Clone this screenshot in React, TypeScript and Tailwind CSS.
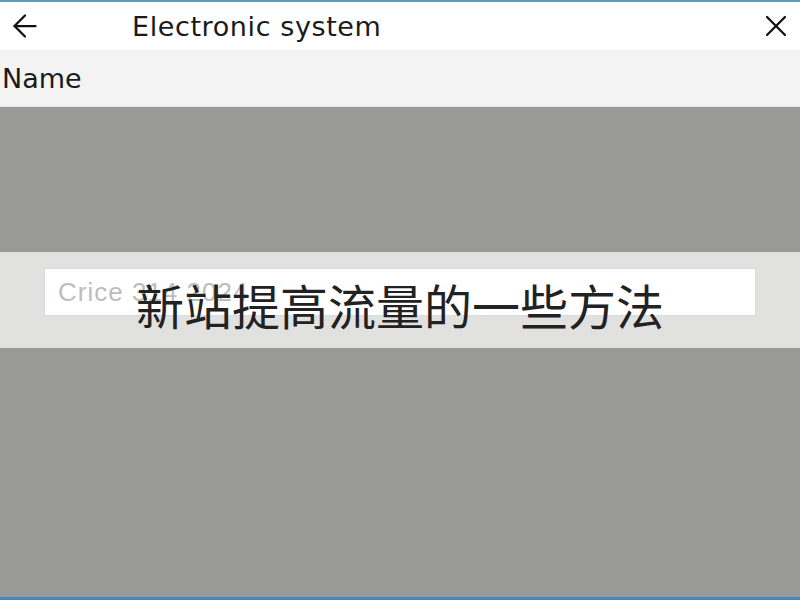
import { ArrowLeft, X } from 'lucide-react';

export default function App() {
  return (
    <div className="relative flex h-[600px] w-[800px] flex-col overflow-hidden bg-[#999998] font-['DejaVu_Sans','Noto_Sans_CJK_SC',sans-serif]">
      {/* window edge */}
      <div className="h-[2px] bg-[#5b9bb8]" />

      {/* Header */}
      <header className="flex h-[48px] items-center bg-white">
        <button className="ml-[7px] flex h-9 w-9 items-center justify-center text-[#111]">
          <ArrowLeft className="h-[36px] w-[36px]" strokeWidth={1.5} />
        </button>
        <h1 className="ml-[89px] text-[27px] leading-none tracking-[0.6px] text-[#1a1a1a]">Electronic system</h1>
        <button className="ml-auto mr-[6px] flex h-9 w-9 items-center justify-center text-[#111]">
          <X className="h-[38px] w-[38px]" strokeWidth={1.5} />
        </button>
      </header>

      {/* Name row */}
      <div className="flex h-[57px] items-center border-b border-[#e6e6e6] bg-[#f3f3f3] pl-[2px]">
        <span className="text-[27px] leading-none text-[#1a1a1a]">Name</span>
      </div>

      <div className="h-[145px]" />

      {/* Input band */}
      <div className="flex h-[96px] items-start bg-[#e1e1e0] px-[44px] pt-[16px]">
        <div className="flex h-[48px] w-full items-center border border-[#d3dde2] bg-white px-[13px]">
          <span className="font-['Liberation_Sans',sans-serif] text-[26px] leading-none tracking-[1px] text-[#bdbdbd]">Crice 314 2024</span>
        </div>
      </div>

      <div className="flex-1" />
      <div className="h-[3px] bg-[#4a86b4]" />

      {/* Overlay caption */}
      <div className="absolute left-0 right-0 top-[280px] text-center font-['Noto_Sans_CJK_SC',sans-serif] text-[48px] leading-none text-[#222]">
        新站提高流量的一些方法
      </div>
    </div>
  );
}
